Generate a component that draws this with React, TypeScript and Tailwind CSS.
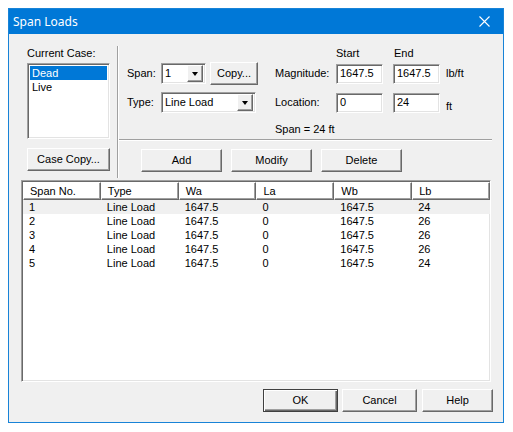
import React from "react";

const font = { fontFamily: '"Liberation Sans", Arial, sans-serif' };

const raised =
  "border border-t-white border-l-white border-r-[#696969] border-b-[#696969] shadow-[inset_-1px_-1px_#a0a0a0] bg-[#f0f0f0]";
const sunken =
  "border border-t-[#a0a0a0] border-l-[#a0a0a0] border-r-white border-b-white shadow-[inset_1px_1px_#696969,inset_-1px_-1px_#e3e3e3] bg-white";

const Button = ({ label, className = "", isDefault = false }: { label: string; className?: string; isDefault?: boolean }) => (
  <div
    className={`flex h-[23px] items-center justify-center text-[11px] text-black ${
      isDefault
        ? "border border-[#404040] shadow-[inset_1px_1px_white,inset_-1px_-1px_#696969,inset_-2px_-2px_#a0a0a0] bg-[#f0f0f0]"
        : raised
    } ${className}`}
  >
    {label}
  </div>
);

const Combo = ({ value, className = "" }: { value: string; className?: string }) => (
  <div className={`flex h-[21px] items-center ${sunken} ${className}`}>
    <span className="flex-1 pl-[3px] text-[11px]">{value}</span>
    <div className={`mr-[2px] flex h-[17px] w-[16px] items-center justify-center ${raised}`}>
      <div className="h-0 w-0 border-x-[3.5px] border-t-[4px] border-x-transparent border-t-black" />
    </div>
  </div>
);

const Field = ({ value }: { value: string }) => (
  <div className={`flex h-[20px] w-[47px] items-center pl-[3px] text-[11px] ${sunken}`}>{value}</div>
);

const rows = [
  ["1", "Line Load", "1647.5", "0", "1647.5", "24"],
  ["2", "Line Load", "1647.5", "0", "1647.5", "26"],
  ["3", "Line Load", "1647.5", "0", "1647.5", "26"],
  ["4", "Line Load", "1647.5", "0", "1647.5", "26"],
  ["5", "Line Load", "1647.5", "0", "1647.5", "24"],
];
const columns = ["Span No.", "Type", "Wa", "La", "Wb", "Lb"];

const App = () => {
  return (
    <div className="h-[432px] w-[513px] bg-white pl-[8px] pt-[8px]" style={font}>
      <div className="flex h-[415px] w-[496px] flex-col border border-[#1883d7] bg-[#f0f0f0] text-black">
        {/* title bar */}
        <div className="flex h-[25px] items-center bg-[#0078d7] pl-[4px] pr-[13px] text-white">
          <span className="flex-1 text-[12px]" style={{ fontFamily: '"Noto Sans", "Open Sans", sans-serif' }}>
            Span Loads
          </span>
          <svg width="11" height="11" viewBox="0 0 11 11">
            <path d="M0.5 0.5 L10.5 10.5 M10.5 0.5 L0.5 10.5" stroke="white" strokeWidth="1.1" />
          </svg>
        </div>

        {/* top area */}
        <div className="flex h-[146px]">
          <div className="ml-[18px] flex w-[83px] flex-col">
            <div className="mt-[13px] h-[13px] text-[11px] leading-[13px]">Current Case:</div>
            <div className={`mt-[3px] h-[76px] p-[2px] text-[11px] leading-[14px] ${sunken}`}>
              <div className="bg-[#0078d7] pl-[2px] text-white">Dead</div>
              <div className="pl-[2px]">Live</div>
            </div>
            <Button label="Case Copy..." className="mt-[9px]" />
          </div>

          <div className="ml-[7px] mt-[12px] h-[132px] w-[2px] border-l border-r border-l-[#a0a0a0] border-r-white" />

          <div className="mr-[11px] flex flex-1 flex-col">
            <div className="mt-[13px] flex h-[13px] pl-[217px] text-[11px] leading-[13px]">
              <span className="w-[58px]">Start</span>
              <span>End</span>
            </div>

            <div className="mt-[3px] flex h-[21px] items-center pl-[8px] text-[11px]">
              <span className="w-[34px]">Span:</span>
              <Combo value="1" className="w-[45px]" />
              <Button label="Copy..." className="ml-[4px] h-[21px] w-[48px]" />
              <span className="ml-[17px] w-[61px]">Magnitude:</span>
              <Field value="1647.5" />
              <div className="ml-[10px]">
                <Field value="1647.5" />
              </div>
              <span className="ml-[6px]">lb/ft</span>
            </div>

            <div className="mt-[8px] flex h-[21px] items-center pl-[8px] text-[11px]">
              <span className="w-[34px]">Type:</span>
              <Combo value="Line Load" className="w-[95px]" />
              <span className="ml-[19px] w-[61px]">Location:</span>
              <Field value="0" />
              <div className="ml-[10px]">
                <Field value="24" />
              </div>
              <span className="ml-[6px] mt-[8px]">ft</span>
            </div>

            <div className="mt-[10px] h-[13px] pl-[156px] text-[11px] leading-[13px]">Span = 24 ft</div>

            <div className="mt-[3px] h-[2px] border-t border-b border-t-[#a0a0a0] border-b-white" />

            <div className="mt-[8px] flex gap-[9px] pl-[22px]">
              <Button label="Add" className="w-[81px]" />
              <Button label="Modify" className="w-[81px]" />
              <Button label="Delete" className="w-[81px]" />
            </div>
          </div>
        </div>

        {/* list view */}
        <div className={`ml-[12px] h-[202px] w-[470px] text-[11px] ${sunken}`}>
          <div className="ml-[1px] mt-[1px] flex h-[18px]">
            {columns.map((c) => (
              <div
                key={c}
                className="flex h-[18px] w-[78px] items-center border border-t-white border-l-white border-r-[#696969] border-b-[#696969] pl-[6px] shadow-[inset_-1px_-1px_#a0a0a0]"
              >
                {c}
              </div>
            ))}
          </div>
          {rows.map((r, i) => (
            <div key={i} className={`ml-[1px] flex h-[14px] items-center ${i === 0 ? "bg-[#f0f0f0]" : ""}`}>
              {r.map((cell, j) => (
                <div key={j} className="w-[78px] pl-[6px] leading-[14px]">
                  {cell}
                </div>
              ))}
            </div>
          ))}
        </div>

        {/* bottom buttons */}
        <div className="mr-[10px] mt-[7px] flex justify-end">
          <Button label="OK" className="w-[75px]" isDefault />
          <Button label="Cancel" className="ml-[4px] w-[75px]" />
          <Button label="Help" className="ml-[5px] w-[71px]" />
        </div>
      </div>
    </div>
  );
};

export default App;
